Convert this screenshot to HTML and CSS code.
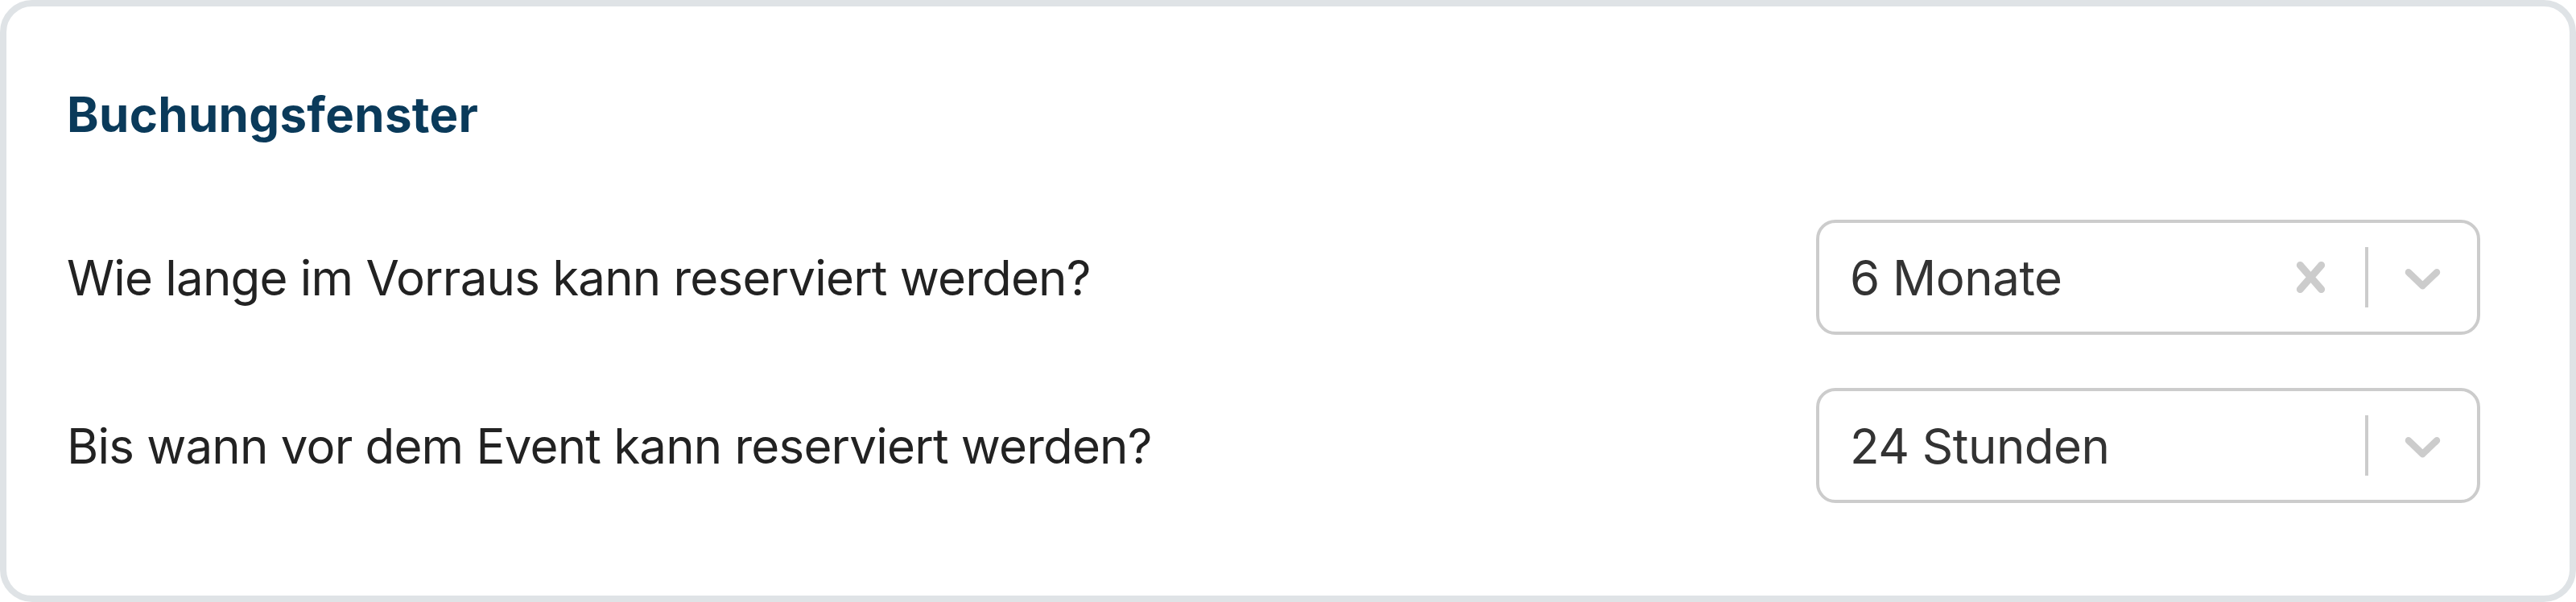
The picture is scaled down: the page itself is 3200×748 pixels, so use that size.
FILE: index.html
```html
<!DOCTYPE html>
<html lang="de">
<head>
    <meta charset="UTF-8">
    <meta name="viewport" content="width=device-width, initial-scale=1.0">
    <title>Buchungsfenster</title>
    <link rel="stylesheet" href="styles.css">
</head>
<body>
    <section class="card">
        <h2 class="card-title">Buchungsfenster</h2>

        <div class="field-row">
            <label class="field-label" for="advance">Wie lange im Vorraus kann reserviert werden?</label>
            <div class="select" id="advance">
                <div class="select-value">6 Monate</div>
                <div class="select-indicators">
                    <div class="indicator">
                        <svg viewBox="0 0 20 20" aria-hidden="true">
                            <path d="M14.348 14.849c-0.469 0.469-1.229 0.469-1.697 0l-2.651-3.030-2.651 3.029c-0.469 0.469-1.229 0.469-1.697 0-0.469-0.469-0.469-1.229 0-1.697l2.758-3.15-2.759-3.152c-0.469-0.469-0.469-1.228 0-1.697s1.228-0.469 1.697 0l2.652 3.031 2.651-3.031c0.469-0.469 1.228-0.469 1.697 0s0.469 1.229 0 1.697l-2.758 3.152 2.758 3.15c0.469 0.469 0.469 1.229 0 1.698z"></path>
                        </svg>
                    </div>
                    <span class="indicator-separator"></span>
                    <div class="indicator">
                        <svg viewBox="0 0 20 20" aria-hidden="true">
                            <path d="M4.516 7.548c0.436-0.446 1.043-0.481 1.576 0l3.908 3.747 3.908-3.747c0.533-0.481 1.141-0.446 1.574 0 0.436 0.445 0.408 1.197 0 1.615-0.406 0.418-4.695 4.502-4.695 4.502-0.217 0.223-0.502 0.335-0.787 0.335s-0.57-0.112-0.789-0.335c0 0-4.287-4.084-4.695-4.502s-0.436-1.170 0-1.615z"></path>
                        </svg>
                    </div>
                </div>
            </div>
        </div>

        <div class="field-row">
            <label class="field-label" for="deadline">Bis wann vor dem Event kann reserviert werden?</label>
            <div class="select" id="deadline">
                <div class="select-value">24 Stunden</div>
                <div class="select-indicators">
                    <span class="indicator-separator"></span>
                    <div class="indicator">
                        <svg viewBox="0 0 20 20" aria-hidden="true">
                            <path d="M4.516 7.548c0.436-0.446 1.043-0.481 1.576 0l3.908 3.747 3.908-3.747c0.533-0.481 1.141-0.446 1.574 0 0.436 0.445 0.408 1.197 0 1.615-0.406 0.418-4.695 4.502-4.695 4.502-0.217 0.223-0.502 0.335-0.787 0.335s-0.57-0.112-0.789-0.335c0 0-4.287-4.084-4.695-4.502s-0.436-1.170 0-1.615z"></path>
                        </svg>
                    </div>
                </div>
            </div>
        </div>
    </section>
</body>
</html>
```

FILE: styles.css
```css
body {
    margin: 0;
    font-family: Inter, "Liberation Sans", sans-serif;
    background-color: #fff;
}
.card {
    box-sizing: border-box;
    width: 3200px;
    height: 748px;
    padding: 98px 111px 116px 75px;
    border: 8px solid #dfe3e6;
    border-radius: 40px;
    background-color: #fff;
}
.card-title {
    margin: 0 0 95px;
    font-size: 60px;
    line-height: 72px;
    font-weight: 700;
    letter-spacing: 0.3px;
    color: #0a3a5a;
}
.field-row {
    display: flex;
    align-items: center;
    justify-content: space-between;
}
.field-row + .field-row {
    margin-top: 66px;
}
.field-label {
    font-size: 60px;
    letter-spacing: -0.8px;
    color: #222;
}
.select {
    box-sizing: border-box;
    display: flex;
    align-items: stretch;
    width: 825px;
    height: 143px;
    border: 4px solid #ccc;
    border-radius: 24px;
    background-color: #fff;
}
.select-value {
    flex: 1;
    display: flex;
    align-items: center;
    padding: 0 38px;
    font-size: 60px;
    letter-spacing: -0.5px;
    color: #333;
}
.select-indicators {
    display: flex;
    align-items: stretch;
}
.indicator {
    display: flex;
    align-items: center;
    padding: 30px;
    color: #ccc;
}
.indicator svg {
    width: 75px;
    height: 75px;
    fill: currentColor;
}
.indicator-separator {
    width: 4px;
    margin: 30px 0;
    background-color: #ccc;
}
```
